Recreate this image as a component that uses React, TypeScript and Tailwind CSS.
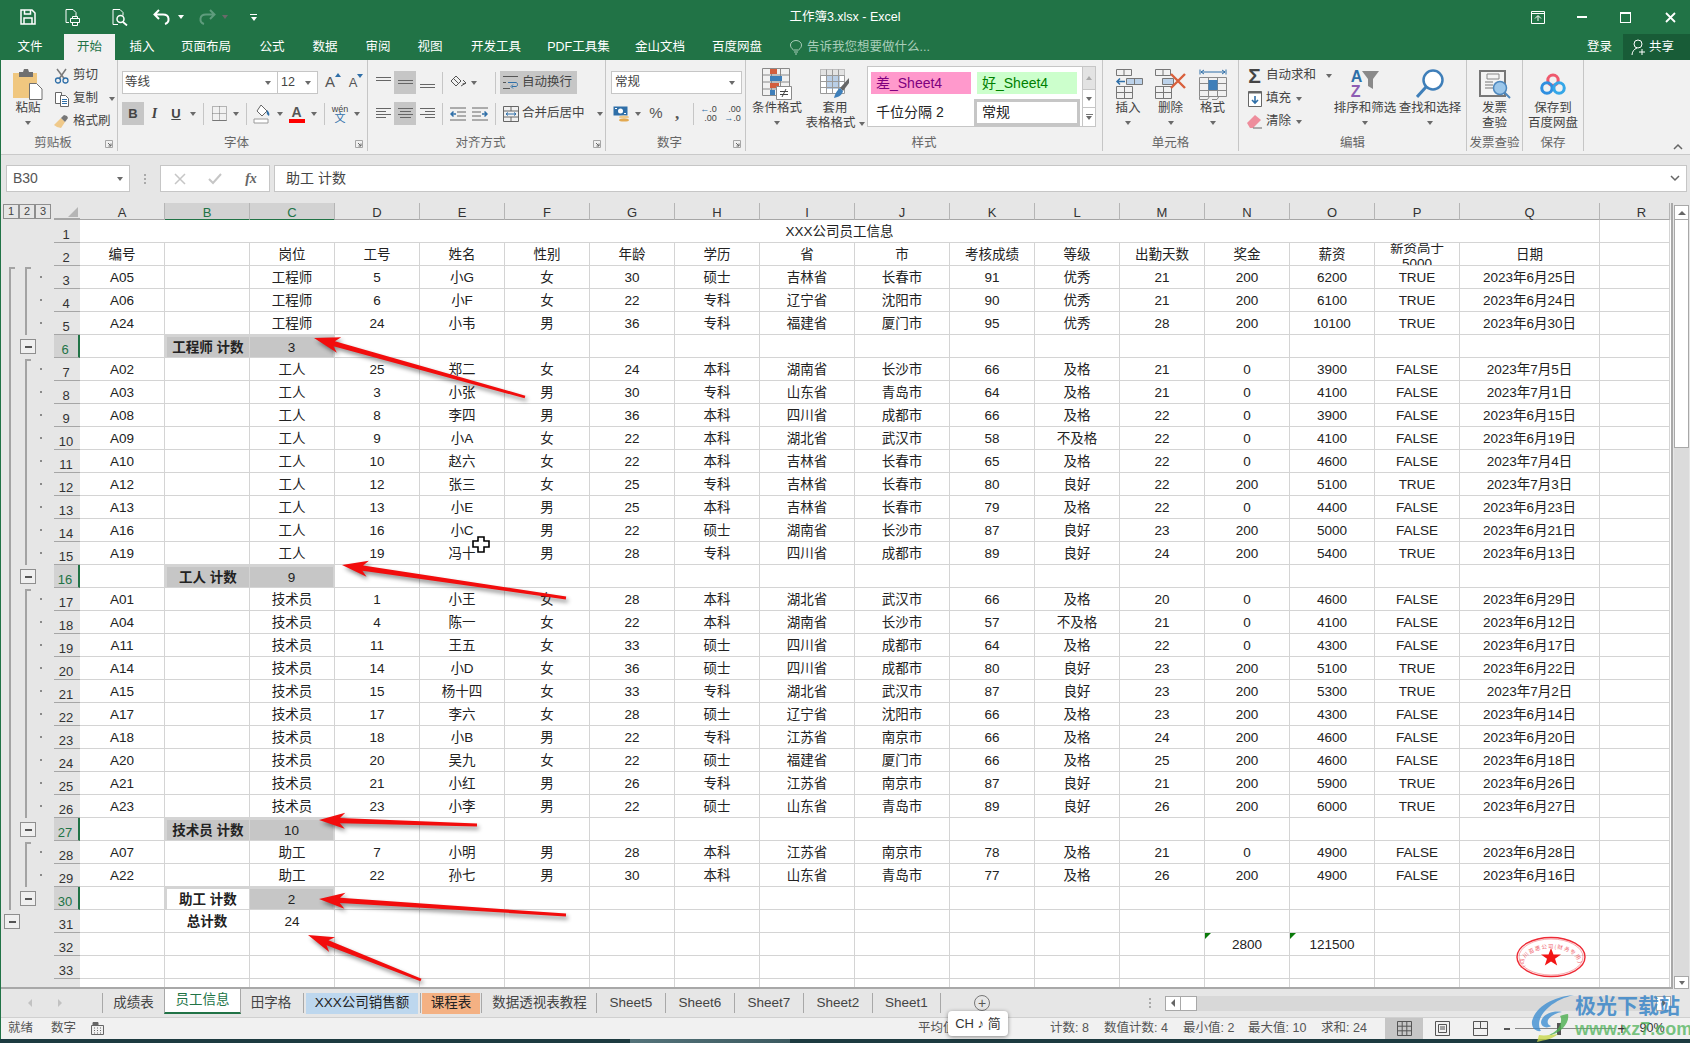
import React from 'react';

const FONT = "font-['Liberation_Sans','Noto_Sans_CJK_SC',sans-serif]";
const GRID_COLS = 'grid grid-cols-[repeat(8,85px)_repeat(2,95px)_repeat(6,85px)_140px_70px]';
const COLUMNS = 'A B C D E F G H I J K L M N O P Q R'.split(' ');

// A C D E F G H I J K L M N O P Q
const RAW: Record<number, string> = {
  3: 'A05 工程师 5 小G 女 30 硕士 吉林省 长春市 91 优秀 21 200 6200 TRUE 2023年6月25日',
  4: 'A06 工程师 6 小F 女 22 专科 辽宁省 沈阳市 90 优秀 21 200 6100 TRUE 2023年6月24日',
  5: 'A24 工程师 24 小韦 男 36 专科 福建省 厦门市 95 优秀 28 200 10100 TRUE 2023年6月30日',
  7: 'A02 工人 25 郑二 女 24 本科 湖南省 长沙市 66 及格 21 0 3900 FALSE 2023年7月5日',
  8: 'A03 工人 3 小张 男 30 专科 山东省 青岛市 64 及格 21 0 4100 FALSE 2023年7月1日',
  9: 'A08 工人 8 李四 男 36 本科 四川省 成都市 66 及格 22 0 3900 FALSE 2023年6月15日',
  10: 'A09 工人 9 小A 女 22 本科 湖北省 武汉市 58 不及格 22 0 4100 FALSE 2023年6月19日',
  11: 'A10 工人 10 赵六 女 22 本科 吉林省 长春市 65 及格 22 0 4600 FALSE 2023年7月4日',
  12: 'A12 工人 12 张三 女 25 专科 吉林省 长春市 80 良好 22 200 5100 TRUE 2023年7月3日',
  13: 'A13 工人 13 小E 男 25 本科 吉林省 长春市 79 及格 22 0 4400 FALSE 2023年6月23日',
  14: 'A16 工人 16 小C 男 22 硕士 湖南省 长沙市 87 良好 23 200 5000 FALSE 2023年6月21日',
  15: 'A19 工人 19 冯十 男 28 专科 四川省 成都市 89 良好 24 200 5400 TRUE 2023年6月13日',
  17: 'A01 技术员 1 小王 女 28 本科 湖北省 武汉市 66 及格 20 0 4600 FALSE 2023年6月29日',
  18: 'A04 技术员 4 陈一 女 22 本科 湖南省 长沙市 57 不及格 21 0 4100 FALSE 2023年6月12日',
  19: 'A11 技术员 11 王五 女 33 硕士 四川省 成都市 64 及格 22 0 4300 FALSE 2023年6月17日',
  20: 'A14 技术员 14 小D 女 36 硕士 四川省 成都市 80 良好 23 200 5100 TRUE 2023年6月22日',
  21: 'A15 技术员 15 杨十四 女 33 专科 湖北省 武汉市 87 良好 23 200 5300 TRUE 2023年7月2日',
  22: 'A17 技术员 17 李六 女 28 硕士 辽宁省 沈阳市 66 及格 23 200 4300 FALSE 2023年6月14日',
  23: 'A18 技术员 18 小B 男 22 专科 江苏省 南京市 66 及格 24 200 4600 FALSE 2023年6月20日',
  24: 'A20 技术员 20 吴九 女 22 硕士 福建省 厦门市 66 及格 25 200 4600 FALSE 2023年6月18日',
  25: 'A21 技术员 21 小红 男 26 专科 江苏省 南京市 87 良好 21 200 5900 TRUE 2023年6月26日',
  26: 'A23 技术员 23 小李 男 22 硕士 山东省 青岛市 89 良好 26 200 6000 TRUE 2023年6月27日',
  28: 'A07 助工 7 小明 男 28 本科 江苏省 南京市 78 及格 21 0 4900 FALSE 2023年6月28日',
  29: 'A22 助工 22 孙七 男 30 本科 山东省 青岛市 77 及格 26 200 4900 FALSE 2023年6月16日',
};
const SUBTOTALS: Record<number, [string, string]> = {
  6: ['工程师 计数', '3'],
  16: ['工人 计数', '9'],
  27: ['技术员 计数', '10'],
  30: ['助工 计数', '2'],
};
const HEAD = ['编号', '', '岗位', '工号', '姓名', '性别', '年龄', '学历', '省', '市', '考核成绩', '等级', '出勤天数', '奖金', '薪资', '', '日期', ''];

const CELL = 'flex items-center justify-center overflow-hidden whitespace-nowrap border-r border-b border-[#d4d4d4] pt-[3px]';

const Caret = ({ className = '' }: { className?: string }) => (
  <span className={`inline-block h-0 w-0 border-x-[3.5px] border-t-[4px] border-x-transparent border-t-[#6a6a6a] ${className}`} />
);

const Dd = ({ className = 'w-[12px]' }: { className?: string }) => (
  <span className={`flex h-[23px] items-center justify-center ${className}`}>
    <Caret />
  </span>
);

const Sep = ({ className = 'mx-[4px]' }: { className?: string }) => (
  <span className={`h-[22px] w-px shrink-0 bg-[#c6c6c6] ${className}`} />
);

const Btn = ({ active, className = 'w-[22px]', children }: { active?: boolean; className?: string; children?: React.ReactNode }) => (
  <span className={`flex h-[23px] shrink-0 items-center justify-center ${active ? 'bg-[#c6c6c6]' : ''} ${className}`}>{children}</span>
);

const Launcher = () => (
  <svg width="8" height="8" viewBox="0 0 8 8" className="mr-[4px] shrink-0">
    <path d="M.5 7.5v-7h7v7z" fill="none" stroke="#a6a6a6" />
    <path d="M3 3l3 3M6 3.5V6H3.5" fill="none" stroke="#666" />
  </svg>
);

const Group = ({ label, launcher, className, children }: { label: string; launcher?: boolean; className: string; children: React.ReactNode }) => (
  <div className={`flex shrink-0 flex-col ${className}`}>
    <div className="flex h-[76px] border-r border-[#c6c6c6] pt-[1px]">
      <div className="flex h-full min-w-0 flex-1">{children}</div>
    </div>
    <div className="flex h-[15px] items-center border-r border-[#c6c6c6]">
      <span className="flex-1 whitespace-nowrap text-center text-[12.5px] text-[#666]">{label}</span>
      {launcher && <Launcher />}
    </div>
  </div>
);

const BigBtn = ({ className, icon, lines, caretAfter }: { className: string; icon: React.ReactNode; lines: string[]; caretAfter?: boolean }) => (
  <div className={`flex shrink-0 flex-col items-center pt-[6px] text-[12.5px] leading-[15px] text-[#444] ${className}`}>
    <div className="flex h-[34px] items-center justify-center">{icon}</div>
    {lines.map((l, i) => (
      <span key={l} className="flex h-[15px] items-center gap-[3px] whitespace-nowrap">
        {l}
        {caretAfter && i === lines.length - 1 && <Caret />}
      </span>
    ))}
    {lines.length === 1 && (
      <span className="flex h-[13px] items-center">
        <Caret />
      </span>
    )}
  </div>
);

const SmallRow = ({ icon, text, caret, className = '' }: { icon: React.ReactNode; text: string; caret?: string; className?: string }) => (
  <div className={`flex h-[23px] items-center whitespace-nowrap text-[12.5px] text-[#444] ${className}`}>
    <span className="flex w-[17px] shrink-0 items-center justify-center">{icon}</span>
    <span className="ml-[3px]">{text}</span>
    {caret && <Caret className={caret} />}
  </div>
);

/* ---------- ribbon icons ---------- */
const AlignIcon = ({ d }: { d: string }) => (
  <svg width="15" height="15" viewBox="0 0 15 15">
    <path d={d} fill="none" stroke="#666" strokeWidth="1" />
  </svg>
);

const ScissorsIcon = () => (
  <svg width="16" height="16" viewBox="0 0 16 16" fill="none">
    <path d="M3 1l7.5 10M12 1L5 11" stroke="#7a7a7a" strokeWidth="1.5" />
    <circle cx="4" cy="12.5" r="2.5" stroke="#2f6fa8" strokeWidth="1.3" />
    <circle cx="11.5" cy="12.5" r="2.5" stroke="#2f6fa8" strokeWidth="1.3" />
  </svg>
);
const CopyIcon = () => (
  <svg width="16" height="16" viewBox="0 0 16 16" fill="none">
    <path d="M1.5 1.5h6v11h-6z" stroke="#666" fill="#fff" />
    <path d="M6.5 4.5h5l3 3v8h-8z" stroke="#666" fill="#fff" />
    <path d="M8 8.5h5M8 10.5h5M8 12.5h5" stroke="#2f6fa8" />
  </svg>
);
const BrushIcon = () => (
  <svg width="17" height="15" viewBox="0 0 17 15">
    <path d="M1 11L8 4l4 4-4 6-4-1z" fill="#efc98a" />
    <path d="M8 4l3-3 3 1 1 2-3 4z" fill="#777" />
  </svg>
);
const PasteIcon = () => (
  <svg width="30" height="31" viewBox="0 0 30 31">
    <path d="M0 4h24v25H0z" fill="#f0c77f" />
    <path d="M6 3h4l1-3h4l1 3h4v5H6z" fill="#707070" />
    <path d="M16.5 14.5h7l5.5 5.5v10.5H16.5z" fill="#fff" stroke="#707070" />
  </svg>
);
const BorderIcon = () => (
  <svg width="15" height="15" viewBox="0 0 15 15">
    <path d="M.5.5h14v14H.5z M7.5.5v14M.5 7.5h14" fill="none" stroke="#777" strokeDasharray="1 1" />
    <path d="M.5 14.5h14" stroke="#777" />
  </svg>
);
const FillIcon = () => (
  <svg width="20" height="20" viewBox="0 0 20 20">
    <path d="M8 1l6 6-5 5-5-5z" fill="#fff" stroke="#666" />
    <path d="M14 6c2 2 3 4 2 6-2-1-3-3-2-6z" fill="#2f6fa8" />
    <path d="M1 15h14v4H1z" fill="#fff" stroke="#9a9a9a" />
  </svg>
);
const CurrencyIcon = () => (
  <svg width="18" height="18" viewBox="0 0 18 18">
    <path d="M.5 1.5h14v9H.5z" fill="#2f6fa8" />
    <circle cx="7.5" cy="6" r="2.5" fill="#fff" />
    <path d="M2 3h2v1H2zM11 8h2v1h-2z" fill="#fff" />
    <ellipse cx="11" cy="12" rx="5" ry="1.6" fill="#efc98a" />
    <ellipse cx="11" cy="15" rx="5" ry="1.6" fill="#e3a950" />
  </svg>
);
const WrapIcon = () => (
  <svg width="16" height="15" viewBox="0 0 16 15" fill="none">
    <path d="M0 1.5h15M0 13.5h7M0 7.5h3" stroke="#555" />
    <path d="M5 7.5h8c2 0 2 4 0 4H9" stroke="#2f6fa8" />
    <path d="M10 9.5l-2 2 2 2" stroke="#2f6fa8" />
  </svg>
);
const MergeIcon = () => (
  <svg width="16" height="16" viewBox="0 0 16 16" fill="none">
    <path d="M.5.5h15v15H.5zM.5 5h15M.5 11h15M8 .5V5M8 11v4.5" stroke="#666" />
    <path d="M3 8h10M5 6.5L3 8l2 1.500M11 6.500L13 8l-2 1.500" stroke="#2f6fa8" />
  </svg>
);
const IndentIcon = ({ flip }: { flip?: boolean }) => (
  <svg width="16" height="14" viewBox="0 0 16 14" fill="none" className={flip ? '-scale-x-100' : ''}>
    <path d="M0 1h16M7 5h9M7 9h9M0 13h16" stroke="#666" />
    <path d="M6 7H1M3.500 4.500L1 7l2.500 2.500" stroke="#2f6fa8" strokeWidth="1.500" />
  </svg>
);
const CondIcon = () => (
  <svg width="30" height="32" viewBox="0 0 30 32" fill="none">
    <path d="M.5.5h27v27H.5zM9.500.5v27M18.500.5v27M.5 7h27M.5 14h27M.5 21h27" stroke="#8a8a8a" />
    <path d="M8 1h7v5H8z" fill="#d35f3e" />
    <path d="M8 8h12v5H8z" fill="#3f7fb9" />
    <path d="M8 15h9v5H8z" fill="#d35f3e" />
    <path d="M8 22h5v5H8z" fill="#3f7fb9" />
    <path d="M14.500 18.500h15v13h-15z" fill="#fff" stroke="#8a8a8a" />
    <path d="M18 23.500h8M18 26.500h8M24 21l-4 8" stroke="#444" />
  </svg>
);
const TableFmtIcon = () => (
  <svg width="30" height="30" viewBox="0 0 30 30" fill="none">
    <path d="M.5.5h24v24H.5z" fill="#fff" stroke="#9a9a9a" />
    <path d="M.5.500h24v6H.5z" fill="#e3e3e3" />
    <path d="M6 7h14v13H6z" fill="#b9cee6" />
    <path d="M6.500.5v24M12.500.5v24M18.500.5v24M.5 6.500h24M.5 12.500h24M.5 18.500h24" stroke="#9a9a9a" />
    <path d="M29 9l-9 10 3 3 6-8z" fill="#666" />
    <path d="M20 19l3 3c-1 4-4 6-9 7 1-3 2-7 6-10z" fill="#3f7fb9" />
  </svg>
);
const InsertIcon = () => (
  <svg width="30" height="30" viewBox="0 0 30 30" fill="none">
    <path d="M3.500.5h15v6h-15zM11 .5v6M3.500 17.500h16v12h-16zM11.500 17.500v12M3.500 23.500h16" stroke="#777" />
    <path d="M13.500 9.500h16v6h-16zM21.500 9.500v6" stroke="#777" fill="#bcd2ea" />
    <path d="M12 12.500H4M7 9.500l-3 3 3 3" stroke="#2f6fa8" strokeWidth="1.500" />
  </svg>
);
const DeleteIcon = () => (
  <svg width="32" height="30" viewBox="0 0 32 30" fill="none">
    <path d="M.5.5h15v6H.5zM8 .5v6M.5 17.500h16v12H.5zM8.500 17.500v12M.5 23.500h16" stroke="#777" />
    <path d="M7.500 9.500h11v6h-11z" stroke="#777" fill="#bcd2ea" />
    <path d="M16 5l14 14M30 5L16 19" stroke="#d9603c" strokeWidth="2.400" />
  </svg>
);
const FormatIcon = () => (
  <svg width="28" height="33" viewBox="0 0 28 33" fill="none">
    <path d="M1 1.500v5M27 1.500v5M2 4h24M5 2L2 4l3 2M23 2l3 2-3 2" stroke="#2f6fa8" />
    <path d="M.5 9.500h27v19H.5zM9.500 9.500v19M18.500 9.500v19M.5 15.500h27M.5 22.500h27" stroke="#8a8a8a" />
    <path d="M9.500 12h9v10h-9z" fill="#3f7fb9" />
    <path d="M.5 28.500v3h8l2-3M13 31.500h5l2-3" stroke="#8a8a8a" />
  </svg>
);
const SortIcon = () => (
  <div className="flex items-center">
    <div className="flex flex-col text-[16px] font-bold leading-[15px]">
      <span className="text-[#2f6fa8]">A</span>
      <span className="text-[#8e5db3]">Z</span>
    </div>
    <svg width="17" height="20" viewBox="0 0 17 20" className="mt-[-8px]">
      <path d="M0 1h17l-6 8v10l-5-3V9z" fill="#8a8a8a" />
    </svg>
  </div>
);
const FindIcon = () => (
  <svg width="28" height="30" viewBox="0 0 28 30" fill="none">
    <circle cx="17" cy="11" r="9.500" fill="#fff" stroke="#3f7fb9" strokeWidth="2.500" />
    <path d="M10 18L1 28" stroke="#3f7fb9" strokeWidth="3" />
  </svg>
);
const InvoiceIcon = () => (
  <svg width="32" height="29" viewBox="0 0 32 29" fill="none">
    <path d="M1 1h25v25H1z" fill="#f4f4f4" stroke="#777" strokeWidth="2" />
    <path d="M8 4h12v5H8z" stroke="#888" />
    <path d="M6 12h8M6 15h8M6 18h8" stroke="#777" />
    <circle cx="21" cy="18" r="6.500" fill="#9cc7ea" stroke="#4d87bd" strokeWidth="1.500" />
    <path d="M26 23l5 5" stroke="#4d87bd" strokeWidth="2" />
  </svg>
);
const BaiduIcon = () => (
  <svg width="26" height="23" viewBox="0 0 30 26" fill="none">
    <circle cx="15" cy="8" r="6" stroke="#ef5a6e" strokeWidth="3.500" />
    <circle cx="8" cy="17" r="6" stroke="#2f8fe0" strokeWidth="3.500" />
    <circle cx="22" cy="17" r="6" stroke="#35a7e8" strokeWidth="3.500" />
  </svg>
);

const ViewIcon = ({ kind }: { kind: number }) => (
  <svg width="15" height="15" viewBox="0 0 15 15" fill="none">
    <path d="M.5.5h14v14H.5z" stroke="#555" />
    {kind === 0 && <path d="M5.200.5v14M9.800.5v14M.5 5.200h14M.5 9.800h14" stroke="#555" />}
    {kind === 1 && <path d="M3.500 3.500h8v8h-8zM5 6h5M5 8h5" stroke="#555" />}
    {kind === 2 && <path d="M7.500.5v7H.5M7.500 7.500h7" stroke="#555" />}
  </svg>
);

/* ---------- sheet rows ---------- */
type Outline = { outer: 'hook' | 'line' | 'box' | 'none'; inner: 'hook' | 'line' | 'box' | 'none'; dot: boolean };

const outlineFor = (n: number): Outline => {
  const outer = n < 3 || n > 31 ? 'none' : n === 3 ? 'hook' : n === 31 ? 'box' : 'line';
  let inner: Outline['inner'] = 'none';
  if (SUBTOTALS[n]) inner = 'box';
  else if (n === 3 || n === 7 || n === 17 || n === 28) inner = 'hook';
  else if (n > 3 && n < 30) inner = 'line';
  return { outer, inner, dot: Boolean(RAW[n]) };
};

const Level = ({ state, className }: { state: Outline['inner']; className: string }) => (
  <div className={`h-full shrink-0 ${className}`}>
    {state === 'line' && <div className="ml-[5px] h-full w-[2px] bg-[#a3a3a3]" />}
    {state === 'hook' && <div className="ml-[5px] mt-[1px] h-[22px] w-[6px] border-l-2 border-t-2 border-[#a3a3a3]" />}
    {state === 'box' && (
      <div className="ml-0 mt-[4px] flex h-[15px] w-[16px] items-center justify-center border border-[#8e8e8e] bg-[#efefef]">
        <span className="h-[2px] w-[7px] bg-[#555]" />
      </div>
    )}
  </div>
);

const Gutter = ({ n }: { n: number }) => {
  const o = outlineFor(n);
  return (
    <div className="flex h-full w-[53px] shrink-0 bg-[#e6e6e6] pl-[3px]">
      <Level state={o.outer} className="w-[16px]" />
      <Level state={o.inner} className="w-[16px]" />
      <div className="flex h-full flex-1 items-center pb-[2px] pl-[4px]">
        {o.dot && <span className="h-[2px] w-[2px] bg-[#8a8a8a]" />}
      </div>
    </div>
  );
};

const RowHead = ({ n, selected }: { n: number | string; selected?: boolean }) => (
  <div
    className={`flex h-full w-[26px] shrink-0 items-end justify-center border-b border-[#a6a6a6] pr-[2px] text-[13px] leading-[14px] ${
      selected ? 'border-r-2 border-r-[#217346] bg-[#d2d2d2] text-[#217346]' : 'bg-[#e6e6e6] text-[#333]'
    }`}
  >
    {n}
  </div>
);

const SheetRow = ({ n }: { n: number }) => {
  const subtotal = SUBTOTALS[n];
  let cells: React.ReactNode;
  if (n === 1) {
    cells = (
      <>
        <div className={`${CELL} col-span-17`}>XXX公司员工信息</div>
        <div className={CELL} />
      </>
    );
  } else if (n === 2) {
    cells = HEAD.map((t, i) =>
      i === 15 ? (
        <div key={i} className={`${CELL} flex-col leading-[16px]`}>
          <span>薪资高于</span>
          <span>5000</span>
        </div>
      ) : (
        <div key={i} className={CELL}>
          {t}
        </div>
      ),
    );
  } else if (subtotal) {
    const active = n === 30;
    cells = COLUMNS.map((c, i) => {
      if (i === 1)
        return (
          <div
            key={c}
            className={`${CELL} font-bold ${
              active ? 'border-2 border-[#217346] bg-white' : 'border-y-2 border-l-2 border-[#a8a8a8] bg-[#c6c6c6]'
            }`}
          >
            {subtotal[0]}
          </div>
        );
      if (i === 2)
        return (
          <div key={c} className={`${CELL} border-y-2 border-r-2 border-[#a8a8a8] bg-[#c6c6c6]`}>
            {subtotal[1]}
          </div>
        );
      return <div key={c} className={CELL} />;
    });
  } else if (n === 31) {
    cells = COLUMNS.map((c, i) => (
      <div key={c} className={`${CELL} ${i === 1 ? 'font-bold' : ''}`}>
        {i === 1 ? '总计数' : i === 2 ? '24' : ''}
      </div>
    ));
  } else if (n === 32) {
    cells = COLUMNS.map((c, i) => (
      <div key={c} className={`${CELL} relative`}>
        {(i === 13 || i === 14) && (
          <span className="absolute left-0 top-0 h-0 w-0 border-r-[6px] border-t-[6px] border-r-transparent border-t-[#0a7a0a]" />
        )}
        {i === 13 ? '2800' : i === 14 ? '121500' : ''}
      </div>
    ));
  } else {
    const raw = RAW[n] ? RAW[n].split(' ') : [];
    const vals = raw.length ? [raw[0], '', ...raw.slice(1), ''] : COLUMNS.map(() => '');
    cells = vals.map((t, i) => (
      <div key={i} className={CELL}>
        {t}
      </div>
    ));
  }
  return (
    <div className="flex h-[23px] shrink-0">
      <Gutter n={n} />
      <RowHead n={n} selected={Boolean(subtotal)} />
      <div className={`${GRID_COLS} h-full flex-1 bg-white text-[13.5px] text-[#222]`}>{cells}</div>
    </div>
  );
};

/* ---------- overlays ---------- */
const arrowPoints = (tx: number, ty: number, x: number, y: number) => {
  const len = Math.hypot(x - tx, y - ty);
  const ux = (x - tx) / len;
  const uy = (y - ty) / len;
  const nx = -uy;
  const ny = ux;
  const p = (along: number, side: number) => `${tx + ux * along + nx * side},${ty + uy * along + ny * side}`;
  return [p(0, 0), p(26, -8), p(21, -2.6), p(len, -1.4), p(len, 1.4), p(21, 2.6), p(26, 8)].join(' ');
};

const ARROWS = [
  [314, 338, 525, 397],
  [342, 565, 566, 598],
  [319, 820, 477, 825],
  [319, 899, 566, 915],
  [308, 935, 421, 980],
];

const Annotations = () => (
  <svg width="1690" height="1043" viewBox="0 0 1690 1043" className="pointer-events-none absolute left-0 top-0">
    <g className="drop-shadow-[2px_3px_2px_rgba(0,0,0,0.45)]">
      {ARROWS.map((a) => (
        <polygon key={a[0] + a[1]} points={arrowPoints(a[0], a[1], a[2], a[3])} fill="#f20d0d" />
      ))}
    </g>
    {/* 十字光标 */}
    <path
      d="M478 537h6v4h5v6h-5v5h-6v-5h-5v-6h5z"
      fill="#fff"
      stroke="#000"
      strokeWidth="1.600"
    />
    {/* 印章 */}
    <g fill="none" stroke="#ee2a35">
      <ellipse cx="1551" cy="957" rx="34" ry="19.500" strokeWidth="1.400" />
      <ellipse cx="1551" cy="957" rx="32" ry="18" strokeWidth="0.400" />
    </g>
    <path id="seal" d="M1525 967 A27 14.500 0 1 1 1577 967" fill="none" />
    <text fontSize="5.500" fill="#f0656e" fontFamily="Noto Sans CJK SC" letterSpacing="0.800">
      <textPath href="#seal">(四川百惠公司(财务专用)</textPath>
    </text>
    <polygon points="1551,948 1553.500,954.500 1561,954.500 1555,958.800 1557.200,965.500 1551,961.500 1544.800,965.500 1547,958.800 1541,954.500 1548.500,954.500" fill="#f21515" />
  </svg>
);

const Watermark = () => (
  <div className="pointer-events-none absolute bottom-0 right-[10px] flex h-[50px] items-start">
    <svg width="44" height="50" viewBox="0 0 44 50" className="opacity-80">
      <path d="M43 2C26 3 5 12 1 28c-1 7 4 11 9 10C6 32 8 22 18 14 25 8 34 4 43 2z" fill="#3f8fd2" />
      <path d="M31 19c-10-2-20 3-21 10 0 5 6 7 10 4-3-1-4-3-3-6 2-4 8-7 14-8z" fill="#3f8fd2" />
      <path d="M37 21c2 9-7 20-21 22 4-2 9-4 12-9 2-4 3-8 1-11 3-1 5-2 8-2z" fill="#4caf50" />
      <path d="M6 49c8-2 16-3 21-8-7 1-14 2-19 1z" fill="#c9d84a" />
    </svg>
    <div className="flex w-[105px] flex-col">
      <span className="text-[21px] font-bold leading-[25px] text-[#3a86c8]/85">极光下载站</span>
      <span className="whitespace-nowrap text-[18px] font-bold leading-[22px] text-[#4fb35a]/75">www.xz7.com</span>
    </div>
  </div>
);

const SHEET_TABS = [
  { t: '成绩表', c: 'w-[61px] text-[#444]' },
  { t: '员工信息', c: 'w-[77px] h-[25px] self-start border-x border-[#a8a8a8] border-b-2 border-b-[#217346] bg-white text-[#217346]' },
  { t: '田字格', c: 'w-[60px] text-[#444]' },
  { t: '|', c: 'w-[5px] text-[#444]' },
  { t: 'XXX公司销售额', c: 'w-[112px] h-[21px] bg-[#bdd7ee] text-[#222]' },
  { t: '|', c: 'w-[4px]' },
  { t: '课程表', c: 'w-[58px] h-[21px] bg-[#f4b183] text-[#222]' },
  { t: '|', c: 'w-[3px]' },
  { t: '数据透视表教程', c: 'w-[114px] text-[#444] border-r border-[#a8a8a8]' },
  { t: 'Sheet5', c: 'w-[69px] text-[#444] border-r border-[#a8a8a8]' },
  { t: 'Sheet6', c: 'w-[69px] text-[#444] border-r border-[#a8a8a8]' },
  { t: 'Sheet7', c: 'w-[69px] text-[#444] border-r border-[#a8a8a8]' },
  { t: 'Sheet2', c: 'w-[69px] text-[#444] border-r border-[#a8a8a8]' },
  { t: 'Sheet1', c: 'w-[68px] text-[#444] border-r border-[#a8a8a8]' },
];

export default function App() {
  const rows = Array.from({ length: 33 }, (_, i) => i + 1);
  return (
    <div className={`relative flex h-[1043px] w-[1690px] flex-col overflow-hidden bg-[#217346] ${FONT}`}>
      {/* 标题栏 */}
      <div className="grid h-[34px] shrink-0 grid-cols-[1fr_auto_1fr] items-center text-white">
        <div className="flex items-center pl-[20px]">
          <svg width="16" height="16" viewBox="0 0 16 16" fill="none" stroke="#fff" strokeWidth="1.500">
            <path d="M1 1h11l3 3v11H1z" />
            <path d="M4.500 1v4h6V1M4 15V9h8v6" />
          </svg>
          <svg width="16" height="17" viewBox="0 0 16 17" fill="none" stroke="#fff" className="ml-[29px]">
            <path d="M1 .5h7l3 3v4M1 .5v13h3" />
            <path d="M5.500 9.500h9v4h-9zM7.500 9.500v-2h5v2M7.500 13.500v3h5v-3" />
          </svg>
          <svg width="16" height="17" viewBox="0 0 16 17" fill="none" stroke="#fff" className="ml-[31px]">
            <path d="M1 .5h7l3 3v3M1 .5v15h5" />
            <circle cx="8.500" cy="10" r="3.500" strokeWidth="1.500" />
            <path d="M11 13l4 3.500" strokeWidth="1.800" />
          </svg>
          <svg width="18" height="16" viewBox="0 0 18 16" fill="none" stroke="#fff" strokeWidth="2" className="ml-[25px]">
            <path d="M6 1L1.500 5.500 6 10M2 5.500h8c7 0 7 8 2 9.500" />
          </svg>
          <Caret className="ml-[7px] border-t-white" />
          <svg width="18" height="16" viewBox="0 0 18 16" fill="none" stroke="#5f9c7d" strokeWidth="2" className="ml-[14px]">
            <path d="M12 1l4.500 4.500L12 10M16 5.500H8C1 5.500 1 13.500 6 15" />
          </svg>
          <Caret className="ml-[6px] border-t-[#5f9c7d]" />
          <span className="ml-[22px] flex flex-col items-center gap-[2px]">
            <span className="h-px w-[7px] bg-white" />
            <Caret className="border-t-white" />
          </span>
        </div>
        <div className="pt-[1px] text-[12.5px]">工作簿3.xlsx - Excel</div>
        <div className="flex items-center justify-end pr-[14px]">
          <svg width="14" height="13" viewBox="0 0 14 13" fill="none" stroke="#fff">
            <path d="M.5.5h13v12H.5zM.5 2.500h13M4 7.500l3-3 3 3M7 5v5" />
          </svg>
          <span className="ml-[32px] h-[2px] w-[10px] bg-white" />
          <span className="ml-[33px] h-[11px] w-[11px] border border-t-2 border-white" />
          <svg width="11" height="11" viewBox="0 0 11 11" stroke="#fff" strokeWidth="1.800" className="ml-[34px]">
            <path d="M1 1l9 9M10 1l-9 9" />
          </svg>
        </div>
      </div>

      {/* 菜单页签 */}
      <div className="flex h-[26px] shrink-0 items-center pl-[6px] text-[12.5px] text-white">
        <span className="w-[48px] text-center">文件</span>
        <span className="ml-[10px] flex h-full w-[51px] items-center justify-center bg-[#f1f1f1] text-[#217346]">开始</span>
        <span className="w-[54px] text-center">插入</span>
        <span className="w-[74px] text-center">页面布局</span>
        <span className="w-[58px] text-center">公式</span>
        <span className="w-[48px] text-center">数据</span>
        <span className="w-[58px] text-center">审阅</span>
        <span className="w-[46px] text-center">视图</span>
        <span className="w-[86px] text-center">开发工具</span>
        <span className="w-[79px] text-center">PDF工具集</span>
        <span className="w-[84px] text-center">金山文档</span>
        <span className="w-[70px] text-center">百度网盘</span>
        <svg width="12" height="15" viewBox="0 0 12 15" fill="none" stroke="#a9cdb9" className="ml-[18px]">
          <path d="M3.500 10C1 8 .5 6.500.5 5a5.500 4.500 0 0 1 11 0c0 1.500-.5 3-3 5zM4 12h4M5 14h2" />
        </svg>
        <span className="ml-[5px] text-[#a9cdb9]">告诉我您想要做什么...</span>
        <span className="ml-auto">登录</span>
        <span className="ml-[11px] flex h-full w-[67px] items-center gap-[3px] bg-[#185c37] pl-[8px]">
          <svg width="15" height="17" viewBox="0 0 15 17" fill="none" stroke="#fff">
            <circle cx="7" cy="5" r="4" />
            <path d="M1 16c0-3 2-6 5-7M8 13h6M11 10v6" />
          </svg>
          共享
        </span>
      </div>

      <div className="flex min-h-0 flex-1 flex-col border-l border-[#217346] bg-[#f1f1f1]">
        {/* 功能区 */}
        <div className="flex h-[95px] shrink-0 border-b border-[#c9c9c9]">
          <Group label="剪贴板" launcher className="w-[117px]">
            <BigBtn
              className="w-[52px] pl-[2px] [&>div]:pt-[1px]"
              icon={<PasteIcon />}
              lines={['粘贴']}
            />
            <div className="flex flex-col pt-[3px]">
              <SmallRow icon={<ScissorsIcon />} text="剪切" />
              <SmallRow icon={<CopyIcon />} text="复制" caret="ml-[11px]" />
              <SmallRow icon={<BrushIcon />} text="格式刷" />
            </div>
          </Group>

          <Group label="字体" launcher className="w-[250px]">
            <div className="flex flex-col pl-[4px] pt-[10px]">
              <div className="flex h-[23px] items-center">
                <div className="flex h-full w-[156px] items-center justify-between border border-[#c6c6c6] bg-white pl-[2px] pr-[6px] text-[12.5px] text-[#444]">
                  等线
                  <Caret />
                </div>
                <div className="flex h-full w-[40px] items-center justify-between border border-l-0 border-[#c6c6c6] bg-white pl-[3px] pr-[6px] text-[12.5px] text-[#444]">
                  12
                  <Caret />
                </div>
                <span className="ml-[4px] flex w-[22px] items-start justify-center text-[15px] text-[#555]">
                  A<span className="mt-[2px] h-0 w-0 border-x-[3px] border-b-[4px] border-x-transparent border-b-[#2f6fa8]" />
                </span>
                <span className="ml-[2px] flex w-[20px] items-start justify-center text-[13px] text-[#555]">
                  A<span className="mt-[1px] h-0 w-0 border-x-[3px] border-t-[4px] border-x-transparent border-t-[#2f6fa8]" />
                </span>
              </div>
              <div className="mt-[8px] flex items-center">
                <Btn active className="w-[22px] text-[13px] font-bold text-[#444]">B</Btn>
                <Btn className="w-[21px] font-['Liberation_Serif'] text-[14px] font-bold italic text-[#444]">I</Btn>
                <Btn className="w-[22px] text-[13px] font-bold text-[#444] underline">U</Btn>
                <Dd />
                <Sep />
                <Btn><BorderIcon /></Btn>
                <Dd />
                <Sep />
                <Btn className="w-[23px]"><FillIcon /></Btn>
                <Dd className="w-[11px]" />
                <Btn className="w-[23px]">
                  <span className="flex flex-col items-center text-[14px] font-bold leading-[14px] text-[#555]">
                    A<span className="h-[4px] w-[16px] bg-[#f00]" />
                  </span>
                </Btn>
                <Dd />
                <Sep />
                <Btn>
                  <span className="flex flex-col items-center text-[9px] leading-[9px] text-[#444]">
                    wén<span className="text-[11px] text-[#2f6fa8]">文</span>
                  </span>
                </Btn>
                <Dd className="w-[11px]" />
              </div>
            </div>
          </Group>

          <Group label="对齐方式" launcher className="w-[238px]">
            <div className="flex flex-col pl-[4px] pt-[10px]">
              <div className="flex items-center">
                <Btn><AlignIcon d="M0 2.500h15M0 5.500h15" /></Btn>
                <Btn active><AlignIcon d="M0 5.500h15M0 8.500h15" /></Btn>
                <Btn><AlignIcon d="M0 9.500h15M0 12.500h15" /></Btn>
                <Sep />
                <Btn className="w-[23px]">
                  <svg width="17" height="15" viewBox="0 0 17 15" fill="none" stroke="#555">
                    <path d="M1 6l5-5 5 5-5 5zM3.500 3.500l5 5M11 11l5-3M13 5l3 3-3.500 1" />
                  </svg>
                </Btn>
                <Dd className="w-[8px]" />
                <Sep className="ml-[17px] mr-[4px]" />
                <span className="flex h-[23px] w-[77px] items-center gap-[3px] bg-[#c6c6c6] pl-[3px] text-[12.5px] text-[#444]">
                  <WrapIcon />
                  自动换行
                </span>
              </div>
              <div className="mt-[8px] flex items-center">
                <Btn><AlignIcon d="M0 2.500h15M0 5.500h10M0 8.500h15M0 11.500h10" /></Btn>
                <Btn active><AlignIcon d="M0 2.500h15M2 5.500h11M0 8.500h15M2 11.500h11" /></Btn>
                <Btn><AlignIcon d="M0 2.500h15M5 5.500h10M0 8.500h15M5 11.500h10" /></Btn>
                <Sep />
                <Btn><IndentIcon /></Btn>
                <Btn><IndentIcon flip /></Btn>
                <Sep />
                <span className="flex h-[23px] items-center gap-[3px] pl-[3px] text-[12.5px] text-[#444]">
                  <MergeIcon />
                  合并后居中
                  <Caret className="ml-[9px]" />
                </span>
              </div>
            </div>
          </Group>

          <Group label="数字" launcher className="w-[140px]">
            <div className="flex flex-col pl-[5px] pt-[10px]">
              <div className="flex h-[23px] w-[131px] items-center justify-between border border-[#c6c6c6] bg-white pl-[3px] pr-[6px] text-[12.5px] text-[#444]">
                常规
                <Caret />
              </div>
              <div className="mt-[8px] flex items-center">
                <Btn><CurrencyIcon /></Btn>
                <Dd className="w-[10px]" />
                <Btn className="ml-[2px] w-[22px] text-[15px] text-[#555]">%</Btn>
                <Btn className="w-[20px] font-['Liberation_Serif'] text-[17px] font-bold text-[#555]">,</Btn>
                <Sep className="ml-[6px] mr-[4px]" />
                <Btn className="w-[21px]">
                  <span className="text-right text-[9px] leading-[9px] text-[#444]">
                    <span className="text-[#2f6fa8]">←</span>.0
                    <br />
                    .00
                  </span>
                </Btn>
                <Btn className="ml-[3px] w-[21px]">
                  <span className="text-right text-[9px] leading-[9px] text-[#444]">
                    .00
                    <br />
                    <span className="text-[#2f6fa8]">→</span>.0
                  </span>
                </Btn>
              </div>
            </div>
          </Group>

          <Group label="样式" className="w-[357px]">
            <BigBtn className="w-[62px]" icon={<CondIcon />} lines={['条件格式']} />
            <BigBtn className="w-[54px]" icon={<TableFmtIcon />} lines={['套用', '表格格式']} caretAfter />
            <div className="ml-[5px] mt-[5px] flex h-[61px] w-[229px] border border-[#c6c6c6] bg-white">
              <div className="grid w-[214px] grid-cols-[100px_100px] grid-rows-[22px_25px] gap-x-[6px] gap-y-[6px] pl-[3px] pt-[5px] text-[14px]">
                <div className="flex items-center bg-[#ff99cc] pl-[5px] text-[#800080]">差_Sheet4</div>
                <div className="flex items-center bg-[#ccffcc] pl-[5px] text-[#008000]">好_Sheet4</div>
                <div className="flex items-center pl-[5px] text-[#222]">千位分隔 2</div>
                <div className="-mx-[3px] -mt-[1px] flex h-[27px] items-center border-[3px] border-[#c6c6c6] pl-[5px] text-[#222]">常规</div>
              </div>
              <div className="flex flex-1 flex-col">
                <span className="flex h-[22px] items-center justify-center border-l border-[#c6c6c6] bg-[#e3e3e3]">
                  <span className="h-0 w-0 border-x-[3.5px] border-b-[4px] border-x-transparent border-b-[#aaa]" />
                </span>
                <span className="flex h-[19px] items-center justify-center border-y border-l border-[#c6c6c6]"><Caret /></span>
                <span className="flex flex-1 flex-col items-center justify-center gap-[1px] border-l border-[#c6c6c6]">
                  <span className="h-px w-[7px] bg-[#777]" />
                  <Caret />
                </span>
              </div>
            </div>
          </Group>

          <Group label="单元格" className="w-[136px]">
            <BigBtn className="ml-[4px] w-[42px]" icon={<InsertIcon />} lines={['插入']} />
            <BigBtn className="w-[43px]" icon={<DeleteIcon />} lines={['删除']} />
            <BigBtn className="w-[41px]" icon={<FormatIcon />} lines={['格式']} />
          </Group>

          <Group label="编辑" className="w-[228px]">
            <div className="flex w-[93px] flex-col pl-[7px] pt-[3px]">
              <SmallRow
                icon={<span className="text-[21px] font-bold leading-none text-[#444]">Σ</span>}
                text="自动求和"
                caret="ml-[10px]"
              />
              <SmallRow
                icon={
                  <svg width="14" height="16" viewBox="0 0 14 16" fill="none">
                    <path d="M.5.500h13v15H.5z" stroke="#666" fill="#fff" />
                    <path d="M.5.500h13v2H.5z" fill="#666" />
                    <path d="M7 5v7M4 9l3 3 3-3" stroke="#2f6fa8" strokeWidth="1.600" />
                  </svg>
                }
                text="填充"
                caret="ml-[5px]"
              />
              <SmallRow
                icon={
                  <svg width="15" height="14" viewBox="0 0 15 14">
                    <path d="M0 8l8-8 6 5-8 8H3z" fill="#ee8d9c" />
                    <path d="M6 13h9" stroke="#666" />
                  </svg>
                }
                text="清除"
                caret="ml-[5px]"
              />
            </div>
            <BigBtn className="w-[66px]" icon={<SortIcon />} lines={['排序和筛选']} />
            <BigBtn className="w-[64px]" icon={<FindIcon />} lines={['查找和选择']} />
          </Group>

          <Group label="发票查验" className="w-[56px]">
            <BigBtn className="w-full" icon={<InvoiceIcon />} lines={['发票', '查验']} />
          </Group>
          <Group label="保存" className="w-[61px]">
            <BigBtn className="w-full" icon={<BaiduIcon />} lines={['保存到', '百度网盘']} />
          </Group>

          <div className="flex flex-1 items-end justify-end pb-[4px] pr-[7px]">
            <svg width="10" height="7" viewBox="0 0 10 7" fill="none" stroke="#666" strokeWidth="1.500">
              <path d="M1 6l4-4 4 4" />
            </svg>
          </div>
        </div>

        {/* 编辑栏 */}
        <div className="flex h-[48px] shrink-0 bg-[#e6e6e6] pb-[11px] pl-[5px] pr-[3px] pt-[10px] text-[#555]">
          <div className="flex w-[124px] items-center justify-between border border-[#c6c6c6] bg-white pl-[6px] pr-[6px] text-[14px]">
            B30
            <Caret />
          </div>
          <div className="flex w-[30px] flex-col items-center justify-center gap-[2px]">
            <span className="h-[2px] w-[2px] bg-[#aaa]" />
            <span className="h-[2px] w-[2px] bg-[#aaa]" />
            <span className="h-[2px] w-[2px] bg-[#aaa]" />
          </div>
          <div className="flex w-[110px] items-center border border-[#c6c6c6] bg-white">
            <span className="flex w-[36px] justify-center pl-[2px]">
              <svg width="12" height="12" viewBox="0 0 12 12" stroke="#c6c6c6" strokeWidth="1.500">
                <path d="M1 1l10 10M11 1L1 11" />
              </svg>
            </span>
            <span className="flex w-[36px] justify-center">
              <svg width="14" height="12" viewBox="0 0 14 12" fill="none" stroke="#c6c6c6" strokeWidth="2">
                <path d="M1 6l4 4 8-9" />
              </svg>
            </span>
            <span className="w-[36px] text-center font-['Liberation_Serif'] text-[14px] font-bold italic text-[#666]">fx</span>
          </div>
          <div className="ml-[4px] flex flex-1 items-center justify-between border border-[#c6c6c6] bg-white pl-[11px] pr-[6px] text-[14px] text-[#444]">
            助工 计数
            <svg width="10" height="7" viewBox="0 0 10 7" fill="none" stroke="#666" strokeWidth="1.500">
              <path d="M1 1l4 4 4-4" />
            </svg>
          </div>
        </div>

        {/* 工作表 */}
        <div className="flex h-[786px] shrink-0 bg-[#e6e6e6]">
          <div className="flex h-full w-[1672px] flex-col overflow-hidden border-r-2 border-b-2 border-[#a8a8a8]">
            <div className="flex h-[17px] shrink-0">
              <div className="flex h-full w-[53px] shrink-0 pl-[2px] pt-[1px]">
                {['1', '2', '3'].map((l) => (
                  <span key={l} className="flex h-[15px] w-[16px] items-center justify-center border border-[#8e8e8e] text-[11px] leading-none text-[#444]">
                    {l}
                  </span>
                ))}
              </div>
              <div className="flex h-full w-[26px] shrink-0 items-end justify-end border-b-2 border-[#a6a6a6] pb-[1px] pr-[2px]">
                <span className="h-0 w-0 border-b-[10px] border-l-[10px] border-b-[#b5b5b5] border-l-transparent" />
              </div>
              <div className={`${GRID_COLS} h-full flex-1 text-[13px] leading-none text-[#333]`}>
                {COLUMNS.map((c) => {
                  const sel = c === 'B' || c === 'C';
                  return (
                    <div
                      key={c}
                      className={`flex items-center justify-center border-r border-b-2 pt-[3px] ${c === 'R' ? 'pl-[14px]' : ''} ${
                        sel ? 'border-r-[#b5b5b5] border-b-[#217346] bg-[#d2d2d2] text-[#217346]' : 'border-r-[#b5b5b5] border-b-[#a6a6a6]'
                      }`}
                    >
                      {c}
                    </div>
                  );
                })}
              </div>
            </div>
            {rows.map((n) => (
              <SheetRow key={n} n={n} />
            ))}
            <div className="flex h-[10px] shrink-0">
              <div className="w-[79px] shrink-0" />
              <div className={`${GRID_COLS} h-full flex-1 bg-white`}>
                {COLUMNS.map((c) => (
                  <div key={c} className="border-r border-[#d4d4d4]" />
                ))}
              </div>
            </div>
          </div>
          <div className="flex flex-1 flex-col items-end pr-[1px] pt-[2px]">
            <span className="flex h-[15px] w-[15px] items-center justify-center border border-[#a8a8a8] bg-white">
              <span className="h-0 w-0 border-x-[4px] border-b-[4px] border-x-transparent border-b-[#666]" />
            </span>
            <span className="h-[228px] w-[15px] border-x border-b border-[#a8a8a8] bg-white" />
            <span className="w-[15px] flex-1 bg-[#dbdbdb]" />
            <span className="flex h-[13px] w-[15px] items-center justify-center border border-[#a8a8a8] bg-white">
              <Caret />
            </span>
          </div>
        </div>

        {/* 工作表页签 */}
        <div className="flex h-[28px] shrink-0 items-center bg-[#e6e6e6] text-[13.5px]">
          <div className="flex h-full w-[101px] shrink-0 items-center border-r-0 pl-[27px]">
            <span className="h-0 w-0 border-y-[4px] border-r-[4px] border-y-transparent border-r-[#c2c2c2]" />
            <span className="ml-[26px] h-0 w-0 border-y-[4px] border-l-[4px] border-y-transparent border-l-[#c2c2c2]" />
          </div>
          <span className="h-[20px] w-px shrink-0 bg-[#a8a8a8]" />
          {SHEET_TABS.map((s, i) =>
            s.t === '|' ? (
              <span key={i} className={`flex h-[20px] shrink-0 justify-center ${s.c}`}>
                <span className="h-full w-px bg-[#a8a8a8]" />
              </span>
            ) : (
              <span key={i} className={`flex h-[20px] shrink-0 items-center justify-center whitespace-nowrap ${s.c}`}>
                {s.t}
              </span>
            ),
          )}
          <span className="ml-[33px] flex h-[16px] w-[16px] items-center justify-center rounded-full border border-[#777] text-[14px] leading-none text-[#555]">+</span>
          <span className="ml-[159px] flex flex-col gap-[2px]">
            <span className="h-[2px] w-[2px] bg-[#aaa]" />
            <span className="h-[2px] w-[2px] bg-[#aaa]" />
            <span className="h-[2px] w-[2px] bg-[#aaa]" />
          </span>
          <span className="ml-[14px] flex h-[15px] w-[16px] items-center justify-center border border-[#a8a8a8] bg-white">
            <span className="h-0 w-0 border-y-[4px] border-r-[4px] border-y-transparent border-r-[#666]" />
          </span>
          <span className="h-[15px] w-[16px] border-y border-r border-[#a8a8a8] bg-white" />
          <span className="h-[15px] w-[459px] bg-[#d8d8d8]" />
          <span className="flex h-[15px] w-[15px] items-center justify-center border border-[#a8a8a8] bg-white">
            <span className="h-0 w-0 border-y-[4px] border-l-[4px] border-y-transparent border-l-[#666]" />
          </span>
        </div>

        {/* 状态栏 */}
        <div className="flex h-[22px] shrink-0 items-center border-t border-[#d0d0d0] bg-[#f1f1f1] text-[12.5px] text-[#555]">
          <span className="ml-[7px] w-[24px] whitespace-nowrap">就绪</span>
          <span className="ml-[19px] w-[24px] whitespace-nowrap">数字</span>
          <span className="ml-[16px] w-[16px]">
            <svg width="13" height="13" viewBox="0 0 13 13" fill="none" stroke="#666">
              <path d="M.5 3.500h12v9H.5z" />
              <path d="M2 .5h5v3H2z" fill="#666" />
              <path d="M3 6h1M6 6h1M9 6h1M3 8.500h1M6 8.500h1M9 8.500h1M3 11h1M6 11h1M9 11h1" />
            </svg>
          </span>
          <span className="ml-[811px] w-[132px] whitespace-nowrap">平均值: 5</span>
          <span className="w-[54px] whitespace-nowrap">计数: 8</span>
          <span className="w-[79px] whitespace-nowrap">数值计数: 4</span>
          <span className="w-[65px] whitespace-nowrap">最小值: 2</span>
          <span className="w-[73px] whitespace-nowrap">最大值: 10</span>
          <span className="w-[64px] whitespace-nowrap">求和: 24</span>
          <span className="flex h-full w-[38px] items-center justify-center bg-[#c6c6c6]"><ViewIcon kind={0} /></span>
          <span className="flex w-[38px] justify-center"><ViewIcon kind={1} /></span>
          <span className="flex w-[38px] justify-center"><ViewIcon kind={2} /></span>
          <span className="flex w-[16px] justify-center"><span className="h-[2px] w-[6px] bg-[#555]" /></span>
          <span className="flex w-[100px] items-center">
            <span className="h-px w-[42px] bg-[#888]" />
            <span className="h-[12px] w-[4px] bg-[#555]" />
            <span className="h-px w-[54px] bg-[#888]" />
          </span>
          <span className="w-[14px] text-center text-[16px] leading-none text-[#333]">+</span>
          <span className="w-[46px] text-center text-[#333]">90%</span>
        </div>

        {/* 任务栏 */}
        <div className="flex h-[4px] shrink-0 -ml-px bg-[#1d3b40]">
          <span className="ml-[630px] h-full w-[160px] bg-gradient-to-r from-[#54737a] to-[#3c5a60]" />
        </div>
      </div>

      <Annotations />
      <Watermark />

      {/* 输入法状态 */}
      <div className="absolute left-[948px] top-[1011px] flex h-[25px] w-[60px] items-center justify-center rounded-[4px] bg-white text-[13px] text-[#333] shadow-[0_1px_4px_rgba(0,0,0,0.45)]">
        CH ♪ 简
      </div>
    </div>
  );
}
